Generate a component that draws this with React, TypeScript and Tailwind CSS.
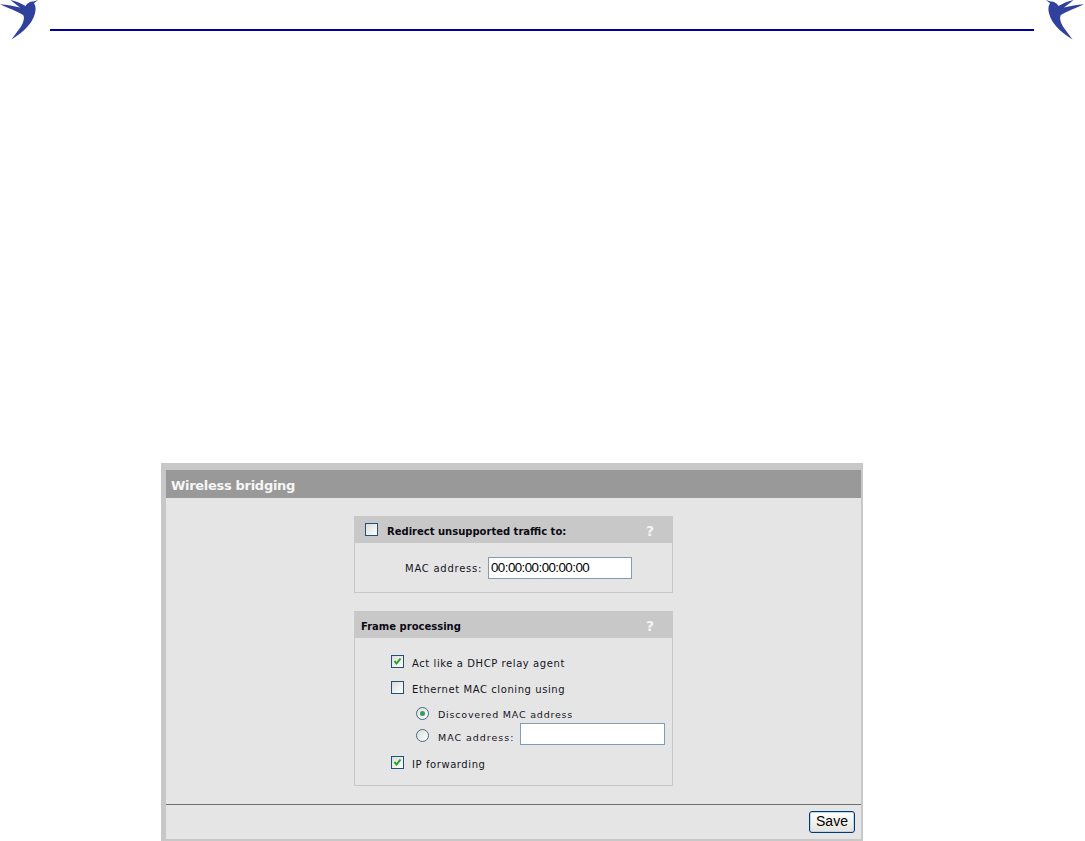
import React from "react";

const DV = "font-['DejaVu_Sans','Verdana',sans-serif]";

function Bird({ flip }: { flip?: boolean }) {
  return (
    <svg width="38" height="41" viewBox="0 0 38 41" className={flip ? "-scale-x-100 shrink-0" : "shrink-0"}>
      <path
        fill="#2f419d"
        d="M38 0 L34 3.2 C36 6 36 10 34.8 14 C32.5 23 24 32 11.5 39.5 C14.5 35 18.5 30.5 21 26.5 C23.5 22.5 24.5 18 23.5 15.5 C21 13 12 9.5 0 4.2 C7 4.8 14 6 20 7.5 C16.5 5 13 2 10.5 0 C15.5 1 20.5 3 25.5 6 C27.5 3 30 1.4 33.5 1.6 Z"
      />
    </svg>
  );
}

function Check({ checked }: { checked?: boolean }) {
  return (
    <span className="flex h-[13px] w-[13px] shrink-0 items-center justify-center border border-[#1c5180] bg-gradient-to-br from-[#dcdcd7] to-white">
      {checked && (
        <svg width="9" height="9" viewBox="0 0 9 9">
          <path d="M1.5 4 L3.5 6.5 L7.5 1.5" fill="none" stroke="#21a121" strokeWidth="2" />
        </svg>
      )}
    </span>
  );
}

function Radio({ checked }: { checked?: boolean }) {
  return (
    <span className="flex h-[13px] w-[13px] shrink-0 items-center justify-center rounded-full border border-[#47698a] bg-gradient-to-br from-[#dcdcd7] to-white">
      {checked && <span className="h-[5px] w-[5px] rounded-full bg-[#2f9e5f]" />}
    </span>
  );
}

function BoxHeader({ children }: { children: React.ReactNode }) {
  return (
    <div className="flex h-[27px] items-center bg-[#c8c8c8]">
      {children}
      <span className={`ml-auto mr-[19px] mt-[3px] text-[14px] font-bold text-[#f4f4f4] ${DV}`}>?</span>
    </div>
  );
}

const label = `text-[10px] leading-[13px] text-[#14141e] tracking-[0.58px] ${DV}`;
const labelWide = `text-[10px] leading-[13px] text-[#14141e] tracking-[0.75px] ${DV}`;
const labelSmall = `text-[9.5px] leading-[13px] text-[#14141e] tracking-[0.8px] ${DV}`;
const labelSmallWide = `text-[9.5px] leading-[13px] text-[#14141e] tracking-[0.97px] ${DV}`;
const boxTitle = `mt-[4px] text-[10px] leading-[13px] font-bold text-[#0a0a14] ${DV}`;

export default function App() {
  return (
    <div className="h-[841px] w-[1085px] overflow-hidden bg-white">
      <header className="flex h-[41px] items-start pr-px">
        <Bird />
        <div className="ml-3 mr-3 mt-[29px] h-0.5 flex-1 bg-[#0000a0]" />
        <Bird flip />
      </header>

      <main className="ml-[161px] mt-[422px] h-[378px] w-[702px] bg-[#c8c8c8] pl-[5px] pr-0.5 pt-[7px] pb-0.5">
        <div className="flex h-full flex-col bg-[#e5e5e5]">
          <h1 className={`flex h-[28px] items-center bg-[#999999] pl-[5px] pt-[4px] text-[13px] font-bold tracking-[-0.3px] text-[#f6f6f6] ${DV}`}>
            Wireless bridging
          </h1>

          <div className="ml-[188px] mt-[18px] w-[319px]">
            <section className="h-[77px] border border-t-0 border-[#c8c8c8]">
              <div className="-mx-px">
                <BoxHeader>
                  <span className="ml-[11px]"><Check /></span>
                  <span className={`ml-[9px] ${boxTitle}`}>Redirect unsupported traffic to:</span>
                </BoxHeader>
              </div>
              <div className="mt-[14px] flex items-center">
                <span className={`ml-[50px] w-[83px] ${labelWide}`}>MAC address:</span>
                <span className="flex h-[22px] w-[144px] items-center border border-[#7f9db9] bg-white pl-0.5 font-['Liberation_Sans',sans-serif] text-[13.33px] tracking-[-0.55px] text-black">
                  00:00:00:00:00:00
                </span>
              </div>
            </section>

            <section className="mt-[18px] h-[175px] border border-t-0 border-[#c8c8c8]">
              <div className="-mx-px">
                <BoxHeader>
                  <span className={`ml-[7px] ${boxTitle}`}>Frame processing</span>
                </BoxHeader>
              </div>
              <div className="mt-[17px] flex h-[13px] items-start gap-[8px] pl-[36px]">
                <Check checked />
                <span className={`mt-[2px] ${label}`}>Act like a DHCP relay agent</span>
              </div>
              <div className="mt-[13px] flex h-[13px] items-start gap-[8px] pl-[36px]">
                <Check />
                <span className={`mt-[2px] ${label}`}>Ethernet MAC cloning using</span>
              </div>
              <div className="mt-[13px] flex h-[13px] items-start gap-[9px] pl-[61px]">
                <Radio checked />
                <span className={`mt-[1px] ${labelSmall}`}>Discovered MAC address</span>
              </div>
              <div className="mt-[3px] flex h-[22px] items-start pl-[61px]">
                <span className="mt-[6px]"><Radio /></span>
                <span className={`ml-[9px] mt-[8px] w-[82px] ${labelSmallWide}`}>MAC address:</span>
                <span className="block h-[22px] w-[145px] border border-[#7f9db9] bg-white" />
              </div>
              <div className="mt-[11px] flex h-[13px] items-start gap-[8px] pl-[36px]">
                <Check checked />
                <span className={`mt-[2px] ${label}`}>IP forwarding</span>
              </div>
            </section>
          </div>

          <footer className="mt-[18px] flex flex-1 items-start justify-end border-t border-[#6e6e6e] pr-[6px] pt-[6px]">
            <button className="h-[22px] w-[46px] rounded-[3px] border border-[#003c74] bg-gradient-to-b from-white to-[#e6e4da] pb-[2px] font-['Liberation_Sans',sans-serif] text-[14px] leading-none text-black shadow-[inset_0_0_0_1px_#bcd4f0]">
              Save
            </button>
          </footer>
        </div>
      </main>
    </div>
  );
}
